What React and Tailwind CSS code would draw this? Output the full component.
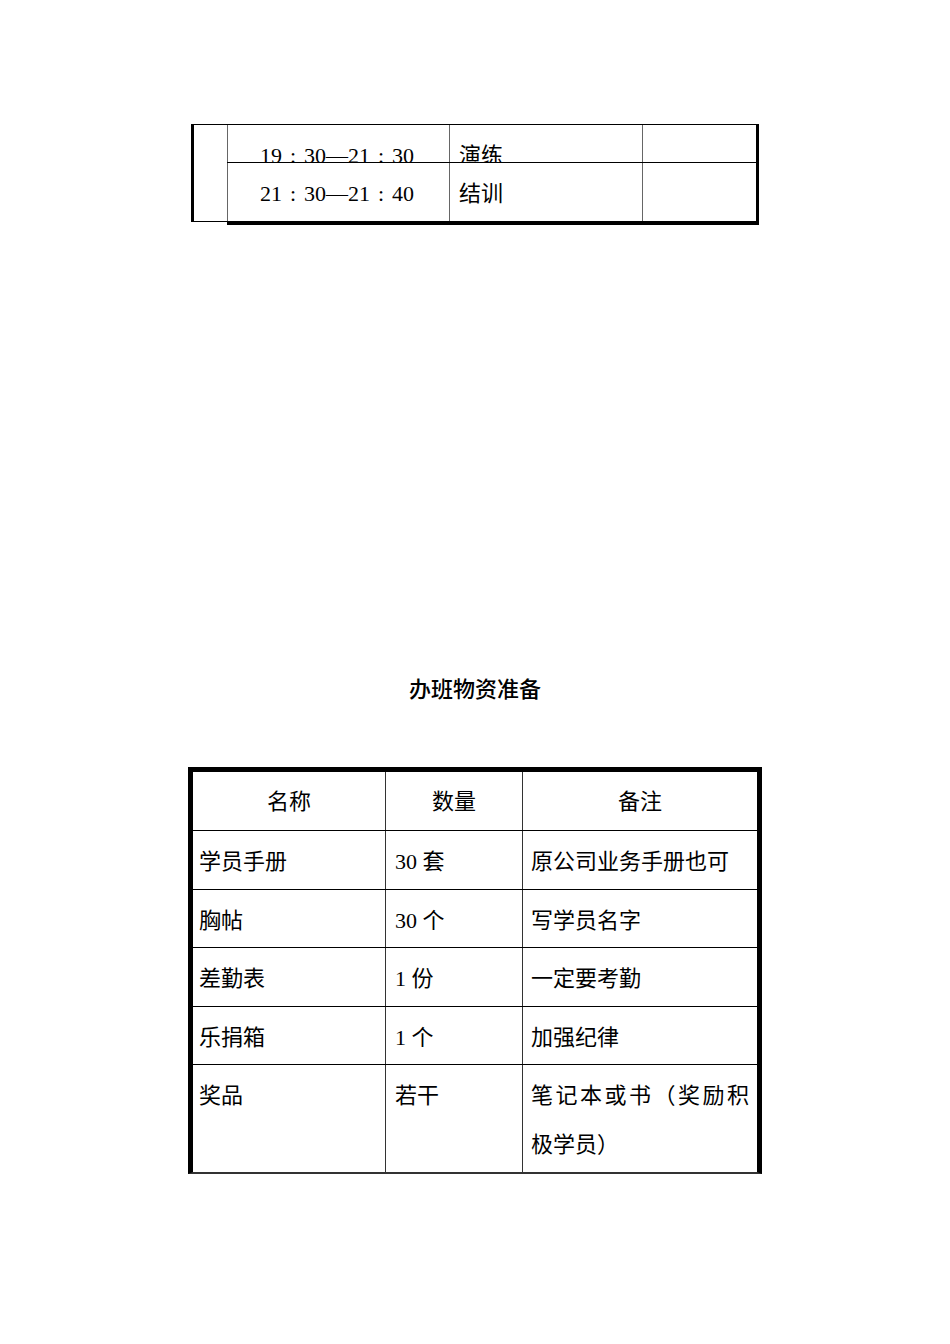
const serif = "font-['Liberation_Serif','Noto_Sans_CJK_SC',serif]";

const scheduleRows = [
  { from: "19", a: "30", to: "21", b: "30", item: "演练", clip: true },
  { from: "21", a: "30", to: "21", b: "40", item: "结训", clip: false },
];

const supplies = [
  { name: "学员手册", qty: "30 套", note: "原公司业务手册也可", h: "h-[59px]" },
  { name: "胸帖", qty: "30 个", note: "写学员名字", h: "h-[58px]" },
  { name: "差勤表", qty: "1 份", note: "一定要考勤", h: "h-[59px]" },
  { name: "乐捐箱", qty: "1 个", note: "加强纪律", h: "h-[58px]" },
];

// full-width colon, drawn centred in its em box like the Song face does
const Colon = () => <span className="inline-block w-[1em] text-center">:</span>;

export default function App() {
  return (
    <div className={`min-h-[1344px] w-[950px] bg-white text-black ${serif} text-[22px]`}>
      <div className="pt-[124px]">
        <ScheduleTable />
      </div>

      <h2 className="mt-[447px] text-center leading-[30px] text-[22px] font-medium font-['Noto_Sans_CJK_SC',sans-serif]">
        办班物资准备
      </h2>

      <div className="mt-[65px] ml-[188px]">
        <SupplyTable />
      </div>
    </div>
  );
}

const ScheduleTable = () => {
  return (
    <div className="ml-[191px] flex w-[568px] items-start">
      <div className="h-[98px] w-[36px] border-l-[3px] border-t border-b border-black" />
      <div className="w-[532px] border-t border-r-[3px] border-b-[4px] border-black">
        {scheduleRows.map((row) => (
          <div
            key={row.item}
            className={`flex overflow-hidden ${
              row.clip ? "h-[38px] border-b border-black" : "h-[58px]"
            }`}
          >
            <div className="w-[222px] shrink-0 border-l border-[#666] pl-[32px] pt-[6px] leading-[49px] whitespace-nowrap">
              {row.from}
              <Colon />
              {row.a}—{row.to}
              <Colon />
              {row.b}
            </div>
            <div className="w-[193px] shrink-0 border-l border-[#666] pl-[9px] pt-[6px] leading-[49px]">
              {row.item}
            </div>
            <div className="w-[114px] shrink-0 border-l border-[#666]" />
          </div>
        ))}
      </div>
    </div>
  );
};

const SupplyTable = () => {
  return (
    <div className="w-[574px] border-[5px] border-b-2 border-black border-b-[#333]">
      <div className="flex h-[59px] border-b border-black">
        <div className="flex w-[193px] shrink-0 items-center justify-center border-r border-[#333]">
          名称
        </div>
        <div className="flex w-[137px] shrink-0 items-center justify-center border-r border-[#333]">
          数量
        </div>
        <div className="flex flex-1 items-center justify-center">备注</div>
      </div>

      {supplies.map((s) => (
        <div key={s.name} className={`flex ${s.h} border-b border-black`}>
          <div className="w-[193px] shrink-0 border-r border-[#333] pl-[6px] pt-[6px] leading-[49px]">
            {s.name}
          </div>
          <div className="w-[137px] shrink-0 border-r border-[#333] pl-[9px] pt-[6px] leading-[49px]">
            {s.qty}
          </div>
          <div className="flex-1 pl-[8px] pt-[6px] leading-[49px] whitespace-nowrap">
            {s.note}
          </div>
        </div>
      ))}

      <div className="flex h-[107px]">
        <div className="w-[193px] shrink-0 border-r border-[#333] pl-[6px] pt-[6px] leading-[49px]">
          奖品
        </div>
        <div className="w-[137px] shrink-0 border-r border-[#333] pl-[9px] pt-[6px] leading-[49px]">
          若干
        </div>
        <div className="flex-1 pl-[8px] pr-[8px] pt-[6px] leading-[49px]">
          <p className="text-justify">笔记本或书（奖励积极学员）</p>
        </div>
      </div>
    </div>
  );
};
